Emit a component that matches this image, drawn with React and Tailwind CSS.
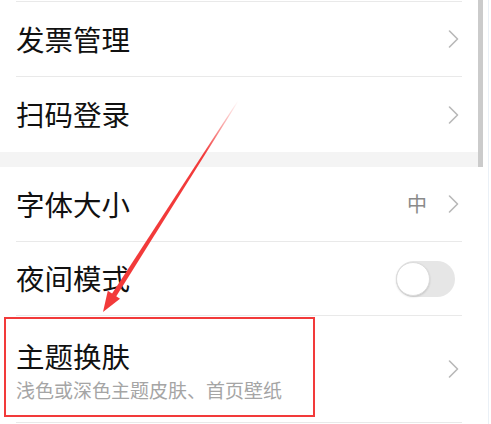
import { useState } from "react";

function Chevron() {
    return (
        <svg width="12" height="18" viewBox="0 0 12 18" className="shrink-0">
            <path d="M2.5 1 L10.5 9 L2.5 17" fill="none" stroke="#b8b8b8" strokeWidth="1.6" strokeLinecap="round" strokeLinejoin="round" />
        </svg>
    );
}

function Row({ label, right, last }) {
    return (
        <div className={`ml-4 mr-4 h-[75px] flex items-center justify-between ${last ? "" : "border-b border-[#e9e9e9]"}`}>
            <span className="text-[28.5px] leading-none text-[#111]">{label}</span>
            <div className="flex items-center gap-5 pr-[3px]">{right}</div>
        </div>
    );
}

function Toggle() {
    const [on, setOn] = useState(false);
    return (
        <button
            onClick={() => setOn(!on)}
            className="relative w-[59px] h-[36px] rounded-full bg-[#e6e6e6] mr-[7px]"
        >
            <span className="absolute left-0 top-[1px] w-[34px] h-[34px] rounded-full bg-white border border-[#dcdcdc] shadow-[0_1px_2px_rgba(0,0,0,0.15)]" />
        </button>
    );
}

export default function App() {
    return (
        <div className="relative w-[491px] h-[424px] overflow-hidden bg-white flex font-['Noto_Sans_CJK_SC',sans-serif]">
            <div className="flex-1 flex flex-col">
                <div className="h-[2px] ml-4 mr-4 border-b border-[#e9e9e9]" />
                <Row label="发票管理" right={<Chevron />} />
                <Row label="扫码登录" right={<Chevron />} last />
                <div className="h-[15px] bg-[#f4f4f4]" />
                <Row
                    label="字体大小"
                    right={
                        <>
                            <span className="text-[20px] leading-none text-[#8a8a8a]">中</span>
                            <Chevron />
                        </>
                    }
                />
                <div className="ml-4 mr-4 h-[74px] flex items-center justify-between border-b border-[#e9e9e9]">
                    <span className="text-[28.5px] leading-none text-[#111]">夜间模式</span>
                    <Toggle />
                </div>
                <div className="relative ml-4 mr-4 h-[107px] flex items-center justify-between border-b border-[#e9e9e9]">
                    <div className="flex flex-col gap-[10px] pt-[3px]">
                        <span className="text-[28.5px] leading-none text-[#111]">主题换肤</span>
                        <span className="text-[19px] leading-none text-[#a5a5a5]">浅色或深色主题皮肤、首页壁纸</span>
                    </div>
                    <div className="pr-[3px]">
                        <Chevron />
                    </div>
                    <div className="absolute left-[-12px] top-[1px] w-[311px] h-[100px] border-2 border-[#f23a3a]" />
                </div>
            </div>
            <div className="w-[13px] flex">
                <div className="w-[5px] h-[167px] bg-[#cbcbcb]" />
                <div className="w-[5px]" />
                <div className="w-px h-full bg-[#eaf0f6]" />
            </div>
            <svg className="absolute inset-0 pointer-events-none" width="491" height="424">
                <defs>
                    <linearGradient id="fade" gradientUnits="userSpaceOnUse" x1="238" y1="101" x2="205" y2="155">
                        <stop offset="0" stopColor="#f23a3a" stopOpacity="0" />
                        <stop offset="1" stopColor="#f23a3a" stopOpacity="1" />
                    </linearGradient>
                </defs>
                <polygon points="238.4,101.2 237.6,100.8 111.8,294.0 116.0,296.7" fill="url(#fade)" />
                <polygon points="103,312 107.8,290.8 120.0,298.8" fill="#f23a3a" />
            </svg>
        </div>
    );
}
